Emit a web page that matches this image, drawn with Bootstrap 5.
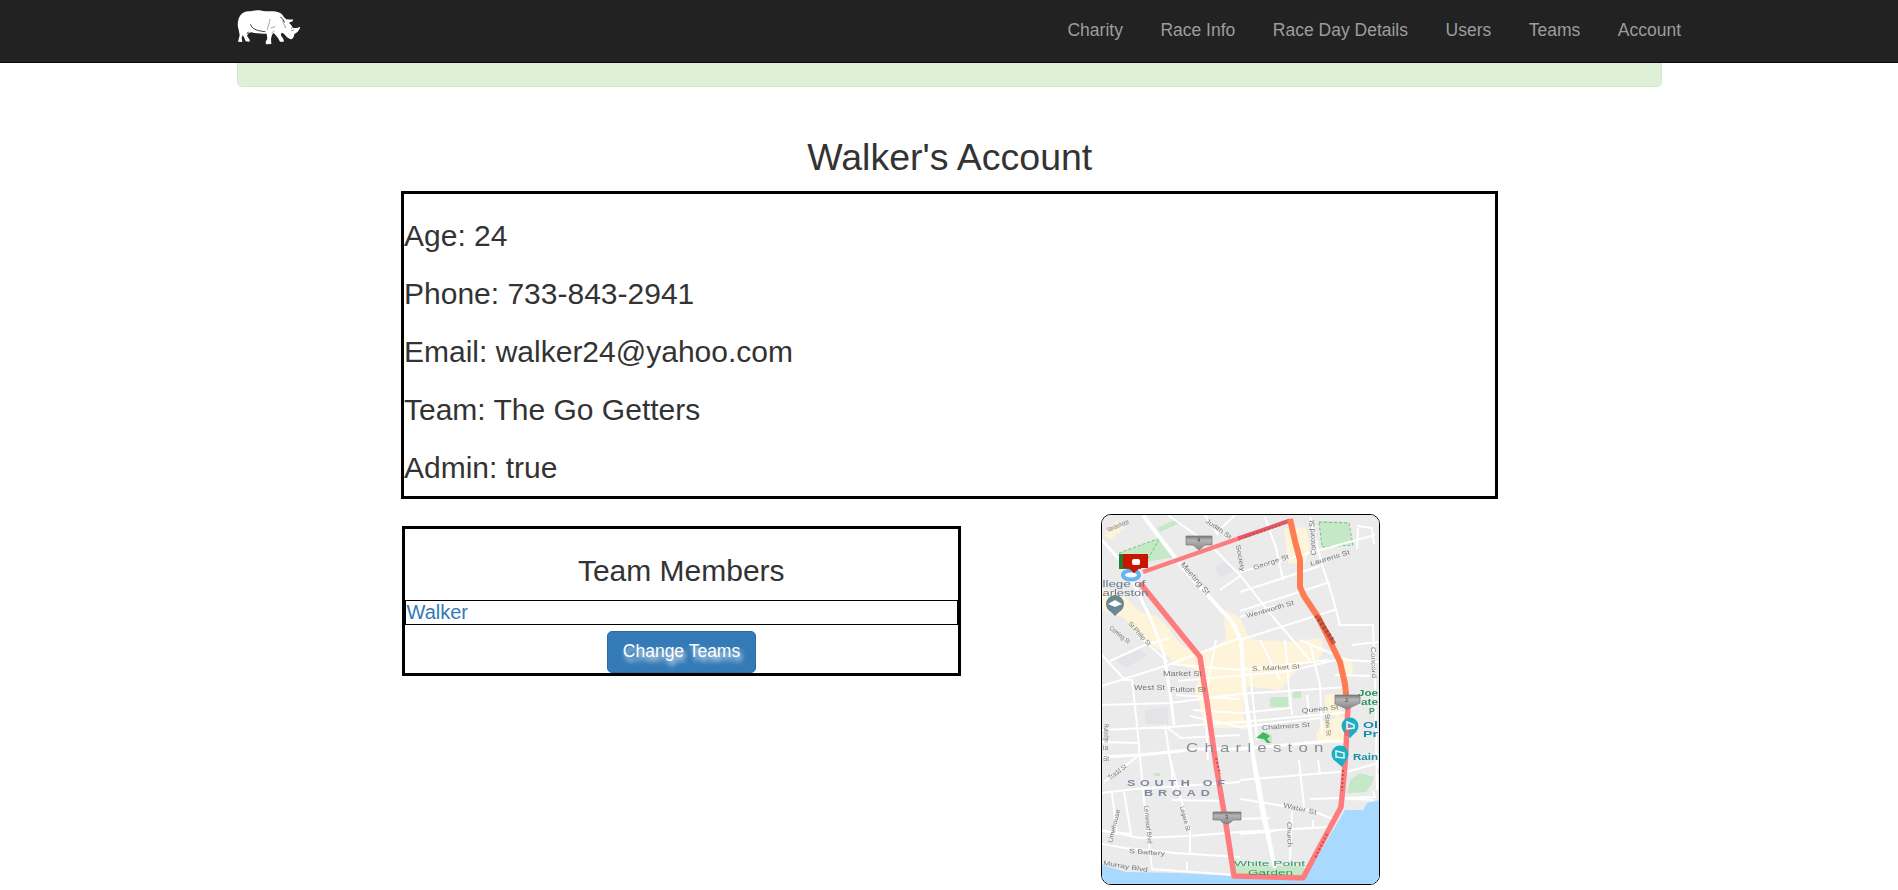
<!DOCTYPE html>
<html lang="en">
<head>
<meta charset="utf-8">
<meta name="viewport" content="width=device-width, initial-scale=1">
<title>Walker's Account</title>
<link href="https://cdn.jsdelivr.net/npm/bootstrap@5.3.0/dist/css/bootstrap.min.css" rel="stylesheet">
<style>
  body { font-family: "Liberation Sans", Arial, sans-serif; font-size: 17.5px; line-height: 25px; color: #333; background: #fff; overflow: hidden; }
  .site-nav { height: 63px; background: #222; border-bottom: 1px solid #080808; }
  .site-width { width: 1425px; max-width: none; }
  .brand-logo { width: 65px; height: 39px; margin-top: 8px; }
  .site-nav .navbar-nav { margin-right: -38.25px; }
  .site-nav .nav-link { color: #9d9d9d; padding: 17.5px 18.75px !important; line-height: 25px; }
  .flash { height: 62px; margin-top: 25px; background: #dff0d8; border: 1px solid #d6e9c6; border-radius: 5px; }
  .page-title { font-size: 37.5px; line-height: 41.25px; font-weight: 400; margin: 49.5px 0 13.25px; padding-left: 1.5px; }
  .account-row { width: 1097px; }
  .frame { border: 3px solid #000; }
  .frame h3 { font-size: 30px; line-height: 33px; font-weight: 400; margin: 25px 0 12.5px; padding-left: .5px; }
  .team-frame { width: 559px; height: 150px; margin: 27px 140px 0 1px; }
  .member { height: 25px; border: 1px solid #000; font-size: 20px; line-height: 23px; padding-left: 1px; margin-bottom: 6px; }
  .member a { color: #337ab7; text-decoration: none; }
  .btn-change { --bs-btn-bg: #337ab7; --bs-btn-border-color: #2e6da4; width: 149px; height: 42px; padding: 7px 0 7px 1px; font-size: 17.5px; line-height: 25px; border-radius: 5px; text-shadow: 2px 4px 5px #fff; }
  .course-map { width: 279px; height: 371px; margin-top: 15px; border: 1px solid #000; border-radius: 10px; overflow: hidden; }
  .course-map text { font-family: "Liberation Sans", Arial, sans-serif; }
</style>
</head>
<body>
<nav class="site-nav navbar navbar-expand fixed-top p-0 align-items-start">
  <div class="site-width mx-auto d-flex justify-content-between">
    <a href="#" class="brand-logo d-block lh-1" aria-label="Home">
      <svg width="65" height="39" viewBox="50 24 195 117">
        <path fill="#fff" d="M54 60C58 45 68 35 84 34C98 33 104 29 118 31C132 35 144 33 158 34C170 35 179 37 186 44C190 50 194 54 198 59C201 56 207 60 217 58L218 63L205 68C212 73 216 80 219 84C227 84 232 85 239 82C236 91 230 98 222 101C222 109 217 117 211 118L202 113C195 107 192 100 185 98C182 99 181 103 183 108L189 117L191 125L179 125L173 114L165 104L160 99L155 104L152 117L153 132L137 133L136 125L141 116L139 101C126 102 108 101 93 97L85 99L80 107L88 119L88 125L76 124L71 112L67 105L64 114L66 126L53 125L58 106L55 89C52 80 51 70 54 60Z"/>
        <g fill="none" stroke="#222" stroke-linecap="round">
          <path stroke-width="2.6" d="M91 74C94 85 104 92 134 95"/>
          <path stroke-width="1.2" d="M149 58C147 70 144 77 141 88M152 84L164 80M186 62L192 75M161 93L155 100"/>
          <path stroke-width="3" d="M181 51C186 56 190 60 192 66M80 100L84 97"/>
          <path stroke-width="1.5" d="M213 86L220 77M213 92L220 90M194 77L195 83"/>
        </g>
        <path fill="#fff" d="M218 99L222 88L240 81C237 91 231 97 222 102ZM193 54L202 62L213 59L217 62L202 69Z"/>
      </svg>
    </a>
    <ul class="navbar-nav">
      <li class="nav-item"><a class="nav-link" href="#">Charity</a></li>
      <li class="nav-item"><a class="nav-link" href="#">Race Info</a></li>
      <li class="nav-item"><a class="nav-link" href="#">Race Day Details</a></li>
      <li class="nav-item"><a class="nav-link" href="#">Users</a></li>
      <li class="nav-item"><a class="nav-link" href="#">Teams</a></li>
      <li class="nav-item"><a class="nav-link" href="#">Account</a></li>
    </ul>
  </div>
</nav>

<main class="site-width mx-auto overflow-hidden">
  <div class="flash" role="status"></div>
  <h2 class="page-title text-center">Walker's Account</h2>
  <div class="account-row mx-auto">
    <section class="frame d-flex flex-column" style="height:308px">
      <h3 class="mb-0">Age: 24</h3>
      <h3 class="mb-0">Phone: 733-843-2941</h3>
      <h3 class="mb-0">Email: walker24@yahoo.com</h3>
      <h3 class="mb-0">Team: The Go Getters</h3>
      <h3 class="mb-0">Admin: true</h3>
    </section>
    <div class="d-flex align-items-start">
      <section class="frame team-frame text-center">
        <h3>Team Members</h3>
        <div class="member text-start"><a href="#">Walker</a></div>
        <a href="#" class="btn btn-primary btn-change">Change Teams</a>
      </section>
      <div class="course-map">
        <svg class="d-block" width="277" height="369" viewBox="1102 515 277 369">
          <defs>
            <filter id="soft" x="0" y="0" width="1" height="1"><feGaussianBlur stdDeviation=".55"/></filter>
            <linearGradient id="pin" x2="0" y2="1"><stop stop-color="#777"/><stop offset=".3" stop-color="#b5b5b5"/><stop offset="1" stop-color="#888"/></linearGradient>
          </defs>
          <rect x="1102" y="515" width="277" height="369" fill="#ebebeb"/>
          <g filter="url(#soft)">
            <!-- commercial blocks -->
            <g fill="#fdf4d9">
              <path d="M1104 536L1116 521L1125 528L1110 540ZM1102 588L1125 597L1140 612L1158 617L1166 625L1178 641L1196 655L1226 640L1224 618L1240 636L1258 640L1290 642L1320 638L1324 650L1318 660L1302 664L1280 690L1244 686L1243 728L1204 728L1200 705L1194 690L1200 678L1195 669L1172 664L1170 658L1148 642L1124 618L1102 610Z"/>
              <path d="M1284 529L1306 527L1310 548L1305 564L1288 563ZM1336 655L1352 660L1353 675L1343 677ZM1324 695L1342 693L1340 720L1326 712ZM1240 720L1252 722V730L1240 729ZM1225 610L1240 618L1250 640L1226 632ZM1275 640L1300 644L1302 666L1270 664ZM1324 720L1350 716L1348 740L1318 744L1316 734Z"/>
            </g>
            <g fill="#e2e4e8">
              <path d="M1114 660L1140 648L1147 655L1126 668ZM1145 710L1168 707V724L1146 724ZM1215 567L1228 560L1235 570L1220 578Z"/>
            </g>
            <!-- parks -->
            <g fill="#c5e8c6">
              <path d="M1160 538L1175 557L1146 562L1119 553ZM1157 528L1177 519L1180 523L1160 532ZM1319 521L1348 522L1353 544L1322 547ZM1270 697h18v10h-18ZM1293 691h8v7h-8ZM1257 736l10-4l5 4v7l-10-2ZM1347 793L1350 780L1360 773L1374 777L1372 784L1366 792ZM1234 866H1304V877H1234ZM1154 773h6v3h-6Z"/>
            </g>
            <path d="M1119 553L1160 538L1146 562M1319 522L1349 523L1353 545L1322 547Z" fill="none" stroke="#70c27c" stroke-width="1" stroke-dasharray="3 2"/>
            <!-- harbour -->
            <path fill="#aad9ff" d="M1102 865L1126 872L1180 873L1234 876L1303 881L1345 810L1363 810L1367 803L1380 800V885H1102ZM1376 768l4 2v7Z"/>
            <!-- streets -->
            <g fill="none" stroke="#fff" stroke-width="2">
              <path stroke-width="4" d="M1143 515L1160 538L1183 568L1232 622L1241 640L1244 685L1255 770L1262 810L1275 868"/>
              <path stroke-width="3" d="M1102 540L1125 566L1150 617L1164 654L1171 700L1174 725M1102 757L1140 755L1200 749L1240 749L1330 741L1348 742"/>
              <path d="M1102 655L1125 680L1132 680L1136 715L1144 800L1152 869M1102 686L1168 665L1240 638M1102 705L1170 703L1240 694L1346 687M1110 661L1145 645L1170 638M1138 635L1168 662"/>
              <path d="M1102 730L1168 727L1240 722L1350 712M1102 742L1139 743M1165 725L1170 760L1183 806L1190 830V854M1142 728L1168 728L1181 738L1240 735M1104 782L1138 756M1102 793L1135 789L1240 782"/>
              <path d="M1102 830L1140 838L1188 836L1240 832L1328 827M1112 793L1117 835M1124 792L1131 834L1102 831M1102 844L1125 848L1175 853L1240 857M1151 869L1235 875M1187 862V870"/>
              <path d="M1168 515L1210 545L1240 575L1273 617L1310 660M1205 515L1218 535M1235 515L1216 533M1240 572L1375 535M1240 592L1320 566M1240 611L1330 582M1240 640L1337 609M1240 617L1275 606M1240 576L1220 590"/>
              <path d="M1265 517L1276 548L1283 580M1310 517L1322 565L1332 595L1340 625M1357 526L1372 528L1374 544M1357 549L1358 528M1338 625L1373 625L1375 680L1377 790M1300 640L1347 660L1378 662"/>
              <path d="M1172 664L1240 670L1330 660M1178 681L1290 671L1336 660M1176 695L1240 699M1193 710L1240 713L1290 708M1190 716L1240 727L1320 718"/>
              <path d="M1260 640L1270 660L1280 680M1285 640L1289 690L1292 715M1310 644L1320 685L1322 735M1335 675L1370 676M1352 645L1378 642M1307 695L1309 715M1250 670L1257 740M1240 780L1350 771L1378 763"/>
              <path d="M1240 799L1310 810L1333 819M1255 760L1268 828L1274 860M1299 760L1304 807M1318 760L1320 774M1240 819L1270 818M1310 799L1375 797L1373 791M1240 834L1276 831M1292 811L1290 860M1313 820V828M1330 798L1374 800M1172 800L1225 801M1171 760L1173 790M1216 640L1205 700L1208 760"/>
            </g>
            <!-- street names -->
            <g fill="#777" font-size="6.5">
              <text transform="translate(1108 532) rotate(-22)" textLength="23" lengthAdjust="spacingAndGlyphs">Vanderhorst</text>
              <text transform="translate(1205 522) rotate(35)" textLength="30" lengthAdjust="spacingAndGlyphs">Judith St</text>
              <text font-size="8" transform="translate(1180 565) rotate(49)" textLength="40" lengthAdjust="spacingAndGlyphs">Meeting St</text>
              <text transform="translate(1254 570) rotate(-18)" textLength="37" lengthAdjust="spacingAndGlyphs">George St</text>
              <text transform="translate(1311 566) rotate(-17)" textLength="41" lengthAdjust="spacingAndGlyphs">Laurens St</text>
              <text font-size="7.5" transform="translate(1316 555) rotate(-93)" textLength="35" lengthAdjust="spacingAndGlyphs">Concord St</text>
              <text transform="translate(1247 618) rotate(-16)" textLength="49" lengthAdjust="spacingAndGlyphs">Wentworth St</text>
              <text transform="translate(1236 545) rotate(80)" textLength="27" lengthAdjust="spacingAndGlyphs">Society</text>
              <text transform="translate(1128 624) rotate(48)" textLength="30" lengthAdjust="spacingAndGlyphs">St Philip St</text>
              <text transform="translate(1109 629) rotate(38)" textLength="24" lengthAdjust="spacingAndGlyphs">Coming St</text>
              <text transform="translate(1252 671) rotate(-3)" textLength="48" lengthAdjust="spacingAndGlyphs">S. Market St</text>
              <text transform="translate(1302 713) rotate(-6)" textLength="37" lengthAdjust="spacingAndGlyphs">Queen St</text>
              <text transform="translate(1262 730) rotate(-4)" textLength="48" lengthAdjust="spacingAndGlyphs">Chalmers St</text>
              <text transform="translate(1325 714) rotate(86)" textLength="22" lengthAdjust="spacingAndGlyphs">State St</text>
              <text transform="translate(1371 647) rotate(88)" textLength="31" lengthAdjust="spacingAndGlyphs">Concord</text>
              <text transform="translate(1104 724) rotate(88)" textLength="19" lengthAdjust="spacingAndGlyphs">Rutledge</text>
              <text x="1103" y="750">ia</text><text x="1103" y="761">St</text>
              <text transform="translate(1110 780) rotate(-36)" textLength="21" lengthAdjust="spacingAndGlyphs">Tradd St</text>
              <text transform="translate(1112 843) rotate(-76)" textLength="34" lengthAdjust="spacingAndGlyphs">Limehouse</text>
              <text transform="translate(1144 806) rotate(84)" textLength="38" lengthAdjust="spacingAndGlyphs">Lenwood Blvd</text>
              <text transform="translate(1180 807) rotate(75)" textLength="25" lengthAdjust="spacingAndGlyphs">Legare St</text>
              <text transform="translate(1129 853) rotate(4)" textLength="36" lengthAdjust="spacingAndGlyphs">S Battery</text>
              <text transform="translate(1103 865) rotate(9)" textLength="45" lengthAdjust="spacingAndGlyphs">Murray Blvd</text>
              <text transform="translate(1283 807) rotate(13)" textLength="34" lengthAdjust="spacingAndGlyphs">Water St</text>
              <text transform="translate(1287 822) rotate(88)" textLength="25" lengthAdjust="spacingAndGlyphs">Church</text>
            </g>
            <!-- course -->
            <g fill="none" stroke-linejoin="round" stroke-width="5.5">
              <path stroke="#fe7c7e" d="M1348 706L1346 748L1345 765L1341 807L1318 850L1303 878L1272 877L1234 876L1225 818L1216 765L1207 702L1200 657L1182 635L1140 583"/>
              <path stroke="#fe7c7e" stroke-width="4.5" d="M1143 572L1240 538"/><path stroke="#e25a66" stroke-width="4" d="M1238 538.5L1290 520.5"/>
              <path stroke="#ff7b52" stroke-width="6" d="M1290 519L1295 541L1300 560V587L1304 596L1318 617L1328 637L1340 662L1345 684L1347.5 708"/>
              <path stroke="#d9543f" stroke-width="4.5" d="M1318 617L1334 644"/>
              <path stroke="#8e4b37" stroke-width="4" stroke-dasharray="1.5 3" d="M1316 616L1334 642"/>
              <path stroke="#c64c54" stroke-width="2" stroke-dasharray="2 2" d="M1343 770L1342 791M1327 834L1315 858M1216 758L1220 774M1245 537L1280 525"/>
            </g>
            <!-- names that run over the course line -->
            <g fill="#777" font-size="6.5">
              <text x="1163" y="676" textLength="39" lengthAdjust="spacingAndGlyphs">Market St</text>
              <text x="1134" y="690" textLength="31" lengthAdjust="spacingAndGlyphs">West St</text>
              <text x="1170" y="692" textLength="36" lengthAdjust="spacingAndGlyphs">Fulton St</text>
            </g>
            <g fill="#8088a2">
              <text transform="translate(1186 752) scale(1.25 1)" font-size="13.5" fill="#8b8d96" textLength="110">Charleston</text>
              <g font-size="9" font-weight="700">
                <text transform="translate(1127 786) scale(1.4 1)" textLength="70">SOUTH OF</text>
                <text transform="translate(1144 796) scale(1.4 1)" textLength="47">BROAD</text>
              </g>
              <g fill="#667989" font-size="9">
                <text x="1102.5" y="587" textLength="43" lengthAdjust="spacingAndGlyphs">llege of</text>
                <text x="1102.5" y="595.5" textLength="46" lengthAdjust="spacingAndGlyphs">arleston</text>
              </g>
              <g fill="#2c9960" font-size="8.5" font-weight="700">
                <text x="1358" y="696" textLength="20" lengthAdjust="spacingAndGlyphs">Joe</text><text x="1361" y="705" textLength="17" lengthAdjust="spacingAndGlyphs">ate</text><text x="1369" y="714">P</text>
                <text x="1234" y="866" font-size="8" font-weight="400" textLength="71" lengthAdjust="spacingAndGlyphs">White Point</text>
                <text x="1248" y="875" font-size="8" font-weight="400" textLength="45" lengthAdjust="spacingAndGlyphs">Garden</text>
              </g>
              <g fill="#178fa8" font-size="8.5" font-weight="700">
                <text x="1363" y="728" textLength="15" lengthAdjust="spacingAndGlyphs">Ol</text><text x="1363" y="737" textLength="15" lengthAdjust="spacingAndGlyphs">Pr</text>
                <text x="1353" y="760" textLength="25" lengthAdjust="spacingAndGlyphs">Rain</text>
              </g>
            </g>
            <!-- places -->
            <g fill="#6b8794"><circle cx="1115" cy="604" r="9"/><path d="M1107 608L1115 616L1123 608Z"/><path fill="#fff" d="M1108 604L1115 600L1122 604L1115 607Z"/></g>
            <g fill="#1eafc4"><circle cx="1350" cy="726" r="8.5"/><path d="M1343 731L1350 738L1357 731Z"/><circle cx="1340" cy="754" r="8.5"/><path d="M1333 759L1342 767L1347 759Z"/></g>
            <path fill="#ef6572" d="M1346 725h4l-1 11h-4z"/>
            <path d="M1347 729V722L1354 725V728ZM1336 757V751L1344 753V758Z" fill="none" stroke="#e1fbff" stroke-width="1.5"/>
            <path fill="#45b761" d="M1263 732l7 4l-3 3l4 4h-4l-3-4l-8-1z"/>
            <!-- mile markers -->
            <g fill="url(#pin)" stroke="#777" stroke-width=".7">
              <path d="M1186 536h26v9h-7l-6 5l-6-5h-7Z"/>
              <path d="M1335 695h25v8l-13 6l-12-5Z"/>
              <path d="M1213 812h28v8h-8c-4 5-9 5-13 0h-7Z"/>
            </g>
            <g fill="#444" font-size="6"><text x="1197" y="542">4</text><text x="1345" y="702">2</text><text x="1225" y="819">3</text></g>
            <ellipse cx="1131" cy="575" rx="8" ry="4.5" fill="#fff" stroke="#68b4f2" stroke-width="4"/>
            <path fill="#237e2d" d="M1119 554h22v15h-22z"/>
            <path fill="#c91405" d="M1123 554h25v14h-8l-6 5l-6-5h-5Z"/><rect x="1132" y="559" width="8" height="6" rx="2" fill="#fff"/>
          </g>
        </svg>
      </div>
    </div>
  </div>
</main>
<script src="https://cdn.jsdelivr.net/npm/bootstrap@5.3.0/dist/js/bootstrap.bundle.min.js"></script>
</body>
</html>
